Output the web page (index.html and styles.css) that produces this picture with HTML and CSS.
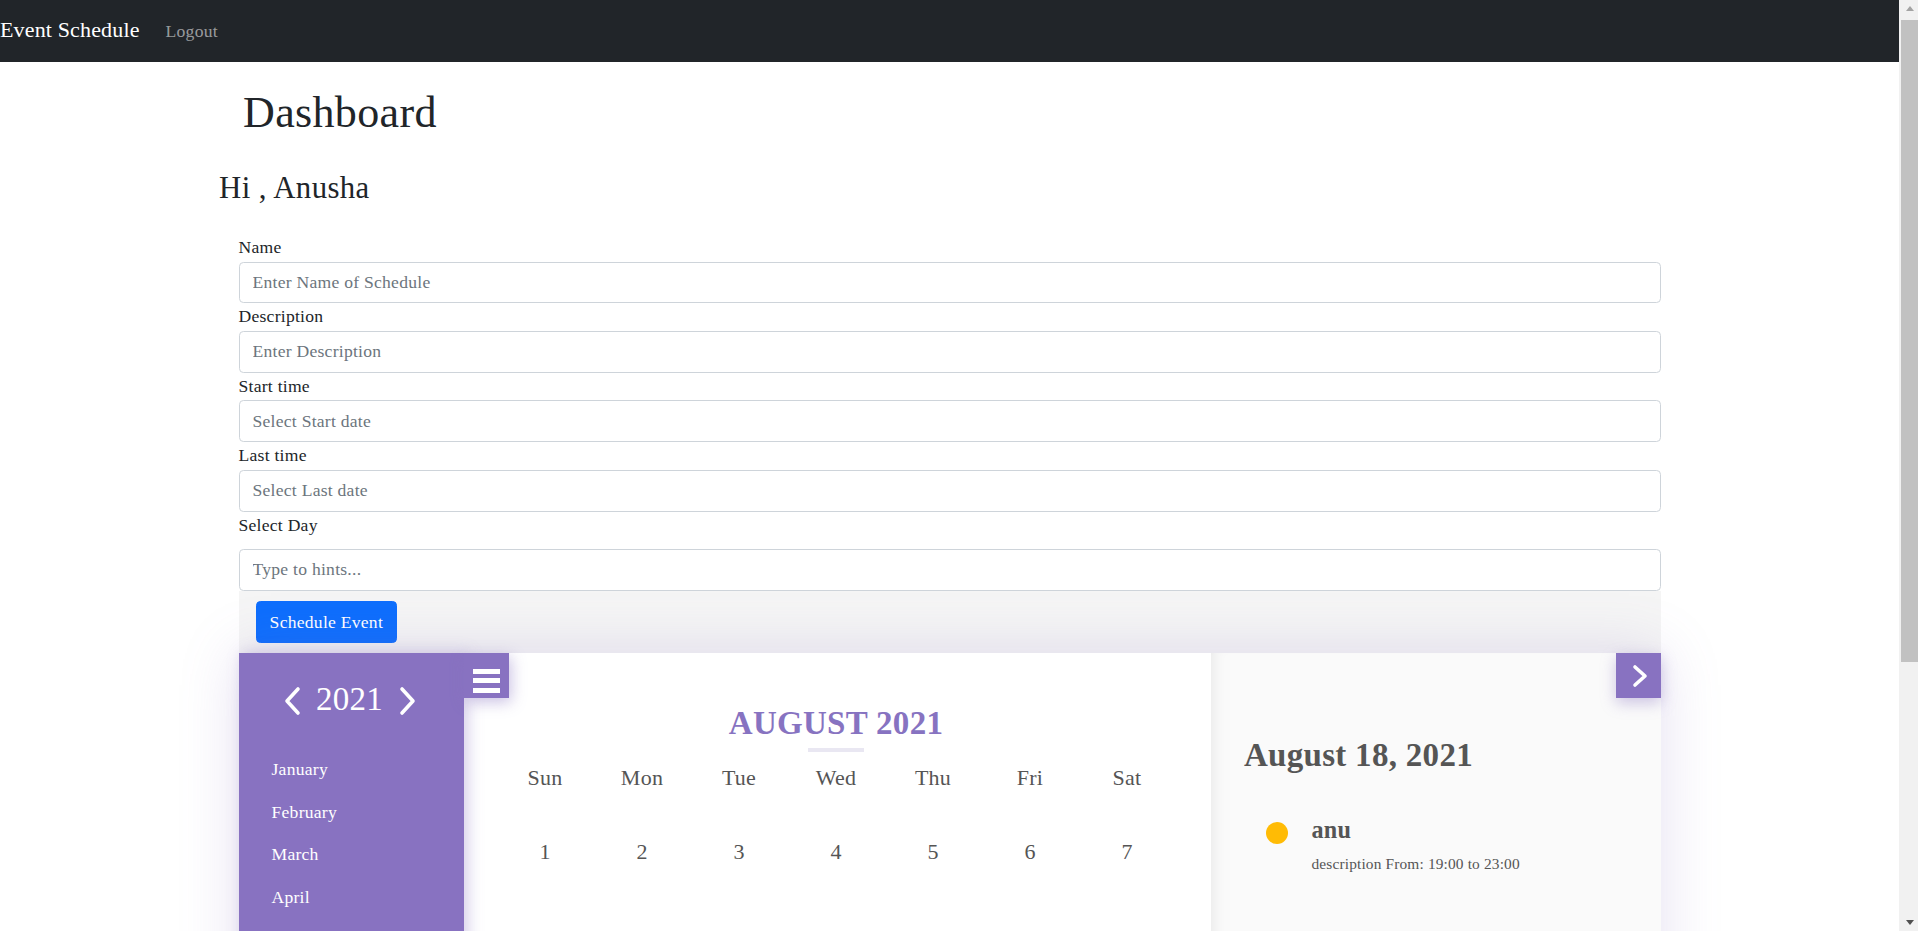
FILE: index.html
```html
<!DOCTYPE html>
<html lang="en">
<head>
<meta charset="utf-8">
<title>Event Schedule</title>
<link rel="stylesheet" href="styles.css">
</head>
<body>
<nav class="navbar">
  <a class="brand" href="#">Event Schedule</a>
  <a class="nav-link" href="#">Logout</a>
</nav>

<main class="page">
  <h1 class="title">Dashboard</h1>
  <h3 class="greeting">Hi , Anusha</h3>

  <form class="form">
    <label class="label">Name</label>
    <input class="input" type="text" placeholder="Enter Name of Schedule">
    <label class="label">Description</label>
    <input class="input" type="text" placeholder="Enter Description">
    <label class="label">Start time</label>
    <input class="input" type="text" placeholder="Select Start date">
    <label class="label">Last time</label>
    <input class="input" type="text" placeholder="Select Last date">
    <label class="label label-day">Select Day</label>
    <input class="input" type="text" placeholder="Type to hints...">
    <div class="actions">
      <button class="btn" type="button">Schedule Event</button>
    </div>
  </form>

  <section class="calendar">
    <aside class="sidebar">
      <div class="year-nav">
        <svg class="chev" width="20" height="30" viewBox="0 0 20 30"><path d="M16 3 L5 15 L16 27" fill="none" stroke="#fff" stroke-width="3.6" stroke-linecap="round" stroke-linejoin="round"/></svg>
        <span class="year">2021</span>
        <svg class="chev" width="20" height="30" viewBox="0 0 20 30"><path d="M4 3 L15 15 L4 27" fill="none" stroke="#fff" stroke-width="3.6" stroke-linecap="round" stroke-linejoin="round"/></svg>
      </div>
      <ul class="months">
        <li>January</li>
        <li>February</li>
        <li>March</li>
        <li>April</li>
      </ul>
      <button class="menu-btn" type="button" aria-label="menu">
        <span></span><span></span><span></span>
      </button>
    </aside>

    <div class="month-view">
      <h2 class="month-title">AUGUST 2021</h2>
      <div class="title-bar"></div>
      <div class="grid weekdays">
        <span>Sun</span><span>Mon</span><span>Tue</span><span>Wed</span><span>Thu</span><span>Fri</span><span>Sat</span>
      </div>
      <div class="grid dates">
        <span>1</span><span>2</span><span>3</span><span>4</span><span>5</span><span>6</span><span>7</span>
      </div>
    </div>

    <div class="events">
      <button class="next-btn" type="button" aria-label="next">
        <svg width="16" height="24" viewBox="0 0 16 24"><path d="M3 3 L13 12 L3 21" fill="none" stroke="#fff" stroke-width="3.6" stroke-linecap="round" stroke-linejoin="round"/></svg>
      </button>
      <h2 class="day-title">August 18, 2021</h2>
      <div class="event">
        <span class="dot"></span>
        <div class="event-body">
          <div class="event-name">anu</div>
          <div class="event-desc">description From: 19:00 to 23:00</div>
        </div>
      </div>
    </div>
  </section>
</main>

<div class="scrollbar" aria-hidden="true">
  <div class="sb-btn"><span class="tri-up"></span></div>
  <div class="sb-track"><div class="sb-thumb"></div></div>
  <div class="sb-btn"><span class="tri-down"></span></div>
</div>
</body>
</html>
```

FILE: styles.css
```css
html {
  overflow: hidden;
}

body {
  margin: 0;
  padding-right: 19px;
  font-family: "Liberation Serif", "Times New Roman", serif;
  font-size: 17.6px;
  line-height: 1.5;
  letter-spacing: 0.25px;
  color: #212529;
  background: #fff;
}

/* navbar */
.navbar {
  display: flex;
  align-items: baseline;
  height: 62px;
  box-sizing: border-box;
  padding-top: 16.6px;
  background: #212529;
}

.brand {
  font-size: 22px;
  line-height: normal;
  letter-spacing: 0.15px;
  color: #fff;
  text-decoration: none;
}

.nav-link {
  margin-left: 26px;
  font-size: 17.6px;
  line-height: normal;
  color: rgba(255, 255, 255, 0.55);
  text-decoration: none;
}

/* page */
.page {
  width: 1422px;
  margin: 0 auto;
}

.title {
  margin: 24.5px 0 0 4.5px;
  font-size: 44px;
  font-weight: 400;
  line-height: 1.2;
  letter-spacing: 0.35px;
}

.greeting {
  margin: 30.8px 0 0 -19.5px;
  font-size: 30.8px;
  font-weight: 400;
  line-height: 1.2;
  letter-spacing: 0.4px;
}

/* form */
.form {
  display: flex;
  flex-direction: column;
  margin-top: 27px;
}

.label {
  display: block;
  line-height: 27.6px;
  font-size: 17.6px;
}

.label-day {
  margin-bottom: 9.9px;
}

.input {
  display: block;
  box-sizing: border-box;
  width: 100%;
  height: 41.8px;
  margin: 0;
  padding: 0 13px;
  font-family: inherit;
  font-size: 17.6px;
  letter-spacing: 0.25px;
  color: #212529;
  background: #fff;
  border: 1px solid #ced4da;
  border-radius: 4.4px;
}

.input::placeholder {
  color: #6c757d;
  opacity: 1;
}

.actions {
  padding: 10.3px 17.6px 10px;
  background: #f5f5f5;
}

.btn {
  display: block;
  height: 42px;
  padding: 0 12.5px;
  font-family: inherit;
  font-size: 17.6px;
  letter-spacing: 0.25px;
  color: #fff;
  background: #0d6efd;
  border: 1px solid #0d6efd;
  border-radius: 4.4px;
}

/* calendar */
.calendar {
  position: relative;
  z-index: 1;
  display: flex;
  height: 420px;
  box-shadow: 0 0 55px rgba(135, 115, 193, 0.22);
}

.sidebar {
  position: relative;
  z-index: 3;
  flex: 0 0 225px;
  box-sizing: border-box;
  padding-top: 24px;
  background: #8872c1;
  color: #fff;
  box-shadow: 4px 0 14px rgba(135, 115, 193, 0.35);
}

.year-nav {
  display: flex;
  align-items: center;
  justify-content: center;
  gap: 14.5px;
  height: 45px;
  padding-right: 3px;
}

.chev {
  display: block;
  margin-top: 2px;
}

.year {
  font-size: 33px;
  line-height: 45px;
}

.months {
  list-style: none;
  margin: 25.8px 0 0;
  padding: 0 0 0 33px;
}

.months li {
  font-size: 17.6px;
  line-height: 42.6px;
}

.menu-btn {
  position: absolute;
  top: 0;
  right: -45px;
  display: flex;
  flex-direction: column;
  align-items: center;
  gap: 4.2px;
  width: 45px;
  height: 45px;
  box-sizing: border-box;
  padding: 16px 0 0;
  margin: 0;
  border: 0;
  background: #8872c1;
  box-shadow: 2px 4px 14px rgba(135, 115, 193, 0.45);
}

.menu-btn span {
  display: block;
  width: 27px;
  height: 5px;
  background: #fff;
}

.month-view {
  position: relative;
  z-index: 2;
  flex: 0 0 747px;
  box-sizing: border-box;
  padding: 50.8px 35px 0 33px;
  background: #fff;
  color: #555;
}

.month-title {
  margin: 0;
  text-align: center;
  font-size: 33px;
  font-weight: 700;
  line-height: 1.2;
  letter-spacing: 0.3px;
  color: #8773c1;
}

.title-bar {
  width: 56px;
  height: 4px;
  margin: 4.9px auto 0;
  background: #e9e7f2;
}

.grid {
  display: grid;
  grid-template-columns: repeat(7, 1fr);
  text-align: center;
  font-size: 22px;
}

.weekdays {
  margin-top: 8.5px;
  line-height: 33px;
}

.dates {
  margin-top: 13.8px;
  line-height: 88px;
}

.events {
  position: relative;
  z-index: 1;
  flex: 1 1 auto;
  box-sizing: border-box;
  padding: 82.8px 30px 0 33.4px;
  background: #fafafa;
  color: #555;
  box-shadow: inset 12px 0 14px -10px rgba(0, 0, 0, 0.08);
}

.next-btn {
  position: absolute;
  top: 0;
  right: 0;
  display: flex;
  align-items: center;
  justify-content: center;
  width: 45px;
  height: 45px;
  padding: 0 0 0 3px;
  margin: 0;
  border: 0;
  background: #8872c1;
  box-shadow: 0 5px 14px rgba(135, 115, 193, 0.4);
}

.next-btn svg {
  display: block;
}

.day-title {
  margin: 0;
  font-size: 33px;
  font-weight: 700;
  line-height: 1.2;
  letter-spacing: 0.3px;
  color: #555;
}

.event {
  display: flex;
  align-items: flex-start;
  margin-top: 39.9px;
  padding-left: 22.6px;
}

.dot {
  flex: 0 0 22px;
  width: 22px;
  height: 22px;
  margin-top: 6.4px;
  border-radius: 50%;
  background: #ffbb05;
}

.event-body {
  margin-left: 23px;
}

.event-name {
  font-size: 24.2px;
  font-weight: 700;
  line-height: 1.2;
}

.event-desc {
  margin-top: 7.9px;
  font-size: 15.4px;
  line-height: 1.5;
  letter-spacing: 0.15px;
}

/* fake browser scrollbar */
.scrollbar {
  position: fixed;
  top: 0;
  right: 0;
  bottom: 0;
  display: flex;
  flex-direction: column;
  width: 19px;
  background: #f1f1f1;
}

.sb-btn {
  display: flex;
  align-items: center;
  justify-content: center;
  height: 17px;
  padding-left: 2px;
}

.tri-up {
  width: 0;
  height: 0;
  border-left: 4.5px solid transparent;
  border-right: 4.5px solid transparent;
  border-bottom: 5px solid #a3a3a3;
}

.tri-down {
  width: 0;
  height: 0;
  border-left: 4.5px solid transparent;
  border-right: 4.5px solid transparent;
  border-top: 5px solid #505050;
}

.sb-track {
  flex: 1 1 auto;
  padding-top: 3px;
}

.sb-thumb {
  height: 642px;
  margin-left: 2px;
  background: #c1c1c1;
}
```
